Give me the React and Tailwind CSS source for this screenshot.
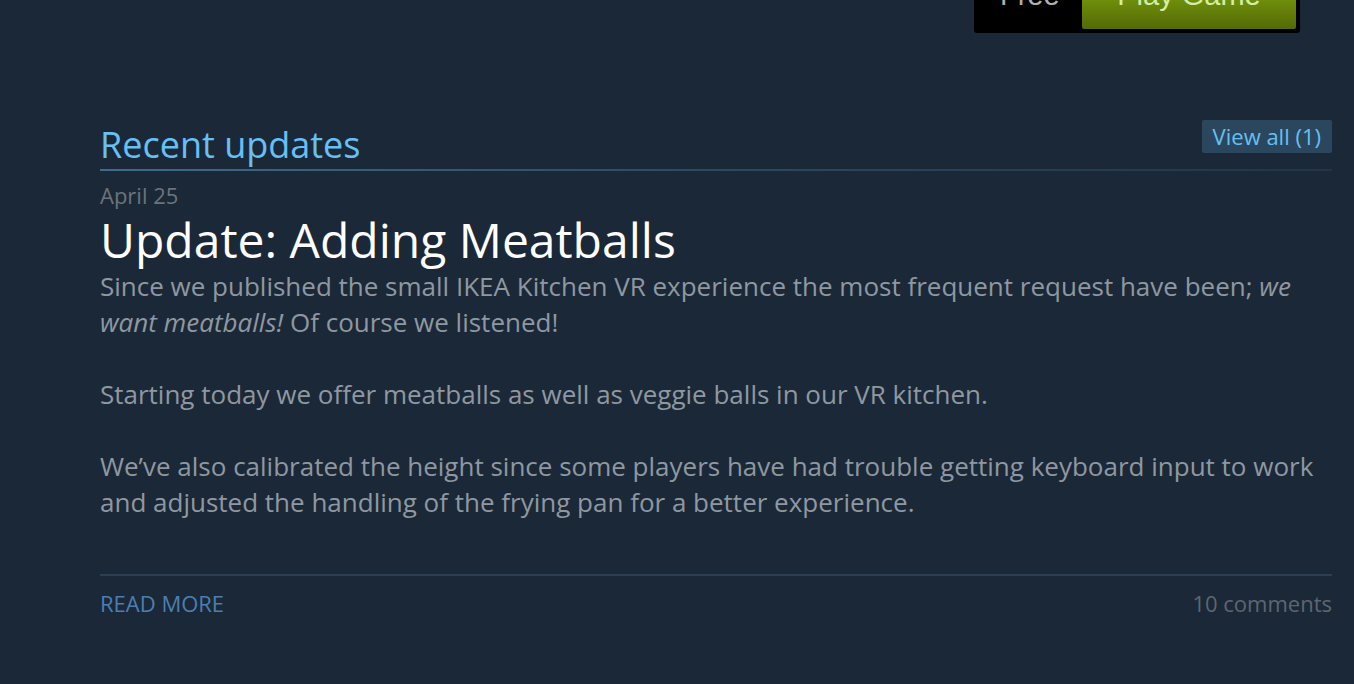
import React from "react";

const App = () => {
  return (
    <div className="min-h-[684px] w-full bg-[#1b2838] font-['Open_Sans','Noto_Sans',sans-serif] overflow-hidden">
      {/* Purchase bar (cut off at top) */}
      <div className="flex justify-end pr-[54px]">
        <div className="flex items-stretch bg-black rounded-b-[3px] pl-[26px] pr-[4px] pb-[4px] h-[33px]">
          <div className="w-[82px] text-[29px] text-[#b0b0b0] font-['Liberation_Sans',sans-serif] leading-none -mt-[19px]">
            Free
          </div>
          <div className="w-[214px] rounded-b-[2px] bg-gradient-to-b from-[#6f8e0b] to-[#536a06] flex justify-center">
            <span className="text-[29px] text-[#d2efa9] font-['Liberation_Sans',sans-serif] leading-none -mt-[19px]">Play Game</span>
          </div>
        </div>
      </div>

      <div className="ml-[100px] mr-[22px] mt-[87px]">
        {/* Section header */}
        <div className="flex items-end justify-between">
          <h2 className="text-[36px] leading-[48px] text-[#66c0f4] font-normal">Recent updates</h2>
          <a className="mb-[16px] rounded-[2px] bg-[#2a475e] px-[11px] h-[33px] flex items-center text-[22px] text-[#66c0f4]">
            View all (1)
          </a>
        </div>
        <div className="h-[2px] bg-gradient-to-r from-[#3e6c8c] via-[#2b4a62] to-[#223548]" />

        <div className="mt-[10px] text-[22px] leading-[28px] text-[#6b737c]">April 25</div>
        <h1 className="mt-[3px] text-[48px] leading-[56px] text-white font-normal">Update: Adding Meatballs</h1>

        <div className="text-[26px] leading-[36px] text-[#8f98a0]">
          <p>
            Since we published the small IKEA Kitchen VR experience the most frequent request have been; <i>we want meatballs!</i> Of course we listened!
          </p>
          <p className="mt-[36px]">Starting today we offer meatballs as well as veggie balls in our VR kitchen.</p>
          <p className="mt-[36px]">
            We’ve also calibrated the height since some players have had trouble getting keyboard input to work and adjusted the handling of the frying pan for a better experience.
          </p>
        </div>

        <div className="mt-[54px] h-[2px] bg-[#2d3f52]" />
        <div className="flex items-center justify-between mt-[13px] text-[22px] leading-[28px]">
          <a className="text-[#4b7fb0] uppercase">Read more</a>
          <span className="text-[#5d6670]">10 comments</span>
        </div>
      </div>
    </div>
  );
};

export default App;
